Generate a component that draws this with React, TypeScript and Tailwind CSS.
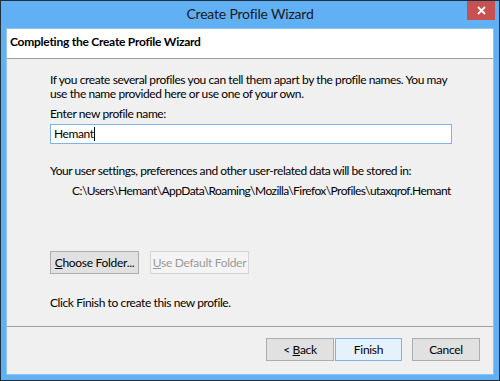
import React from "react";

const font = { fontFamily: 'Lato, "Noto Sans", sans-serif' };

function Btn({ children, w, primary, disabled }: { children: React.ReactNode; w: string; primary?: boolean; disabled?: boolean }) {
  let cls = "border-[#adadad] bg-[#e1e1e1] text-black";
  if (primary) cls = "border-[#7eb4ea] bg-[#e5f1fb] text-black";
  if (disabled) cls = "border-[#d4d4d4] bg-[#f4f4f4] text-[#9a9a9a]";
  return (
    <div className={`h-[23px] ${w} border flex items-center justify-center whitespace-nowrap text-[12px] tracking-[-0.3px] ${cls}`}>{children}</div>
  );
}

export default function App() {
  return (
    <div className="w-[500px] h-[381px] bg-[#62b0f4] border border-[#1e2f40] flex flex-col text-black" style={font}>
      <div className="relative h-[27px] flex items-center justify-center shrink-0">
        <span className="text-[14px] tracking-[-0.2px] text-[#1a1a1a] mb-[2px]">Create Profile Wizard</span>
        <div className="absolute right-[4px] top-0 w-[28px] h-[19px] bg-[#c75050] flex items-center justify-center">
          <svg width="9" height="9" viewBox="0 0 9 9">
            <path d="M1 1L8 8M8 1L1 8" stroke="#fff" strokeWidth="1.8" />
          </svg>
        </div>
      </div>
      <div className="mx-[5px] mb-[5px] flex-1 flex flex-col border border-[#8ec3f2] bg-[#f0f0f0]">
        <div className="h-[30px] bg-white border-b border-[#a0a0a0] flex items-center pl-[3px] pb-[3px] shrink-0">
          <span className="text-[12px] font-bold tracking-[-0.25px]">Completing the Create Profile Wizard</span>
        </div>
        <div className="h-[268px] pl-[43px] pt-[14px] flex flex-col text-[12px] leading-[14px] tracking-[-0.4px] whitespace-nowrap border-b border-[#a0a0a0] shrink-0">
          <p>If you create several profiles you can tell them apart by the profile names. You may</p>
          <p>use the name provided here or use one of your own.</p>
          <p className="mt-[6px]">Enter new profile name:</p>
          <div className="mt-[3px] w-[402px] h-[20px] bg-white border border-[#7eb4ea] flex items-center pl-[3px]">
            <span>Hemant</span>
            <span className="w-[1px] h-[14px] bg-black" />
          </div>
          <p className="mt-[20px] tracking-[-0.45px]">Your user settings, preferences and other user-related data will be stored in:</p>
          <p className="mt-[6px] pl-[22px] tracking-[-0.55px]">C:\Users\Hemant\AppData\Roaming\Mozilla\Firefox\Profiles\utaxqrof.Hemant</p>
          <div className="mt-[53px] flex gap-[11px]">
            <Btn w="w-[89px]"><span><u>C</u>hoose Folder...</span></Btn>
            <Btn w="w-[99px]" disabled><span><u>U</u>se Default Folder</span></Btn>
          </div>
          <p className="mt-[22px]">Click Finish to create this new profile.</p>
        </div>
        <div className="flex-1 flex justify-end items-start pt-[11px] pr-[13px]">
          <Btn w="w-[68px]"><span>&lt; <u>B</u>ack</span></Btn>
          <div className="ml-[1px]"><Btn w="w-[67px]" primary>Finish</Btn></div>
          <div className="ml-[10px]"><Btn w="w-[68px]">Cancel</Btn></div>
        </div>
      </div>
    </div>
  );
}
